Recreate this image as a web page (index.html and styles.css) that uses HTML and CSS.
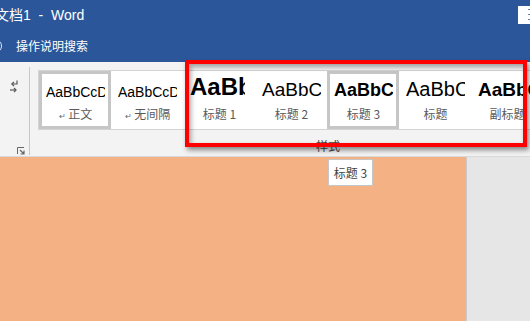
FILE: index.html
```html
<!DOCTYPE html>
<html lang="zh-CN">
<head>
<meta charset="utf-8">
<title>文档1 - Word</title>
<link rel="stylesheet" href="styles.css">
</head>
<body>
<div class="app">
  <header class="titlebar">
    <div class="title-row">
      <span class="title">文档1&nbsp;&nbsp;-&nbsp;&nbsp;Word</span>
      <span class="win-icon"><i></i><i></i><i></i></span>
    </div>
    <div class="search-row">
      <span class="bulb"></span>
      <span class="search-text">操作说明搜索</span>
    </div>
  </header>

  <section class="ribbon">
    <div class="para-group">
      <svg class="para-icon" width="8" height="13" viewBox="0 0 8 13">
        <path d="M7 0.5V4H2.5" fill="none" stroke="#555" stroke-width="1.2"/>
        <path d="M4 2L1.8 4L4 6" fill="none" stroke="#555" stroke-width="1.2"/>
        <path d="M0 10H5.5" fill="none" stroke="#555" stroke-width="1.2"/>
        <path d="M4 8L6 10L4 12" fill="none" stroke="#555" stroke-width="1.2"/>
      </svg>
      <svg class="launcher" width="8" height="8" viewBox="0 0 8 8">
        <path d="M0.5 7V0.5H7" fill="none" stroke="#666" stroke-width="1"/>
        <path d="M3 3L7 7M7 3.5V7H3.5" fill="none" stroke="#666" stroke-width="1.2"/>
      </svg>
    </div>
    <div class="sep"></div>
    <div class="styles-group">
      <div class="gallery">
        <div class="item selected">
          <div class="sample s-normal">AaBbCcDdEe</div>
          <div class="label"><span class="pm">↵</span> 正文</div>
        </div>
        <div class="item">
          <div class="sample s-normal">AaBbCcDdEe</div>
          <div class="label"><span class="pm">↵</span> 无间隔</div>
        </div>
        <div class="item">
          <div class="sample s-h1">AaBbCc</div>
          <div class="label">标题 1</div>
        </div>
        <div class="item">
          <div class="sample s-h2">AaBbCc</div>
          <div class="label">标题 2</div>
        </div>
        <div class="item selected">
          <div class="sample s-h3">AaBbCc</div>
          <div class="label">标题 3</div>
        </div>
        <div class="item">
          <div class="sample s-title">AaBbCc</div>
          <div class="label">标题</div>
        </div>
        <div class="item">
          <div class="sample s-sub">AaBbCc</div>
          <div class="label">副标题</div>
        </div>
      </div>
      <div class="group-label">样式</div>
    </div>
  </section>

  <main class="doc">
    <div class="page"></div>
    <div class="side"></div>
  </main>

  <div class="highlight"></div>
  <div class="tooltip">标题 3</div>
</div>
</body>
</html>
```

FILE: styles.css
```css
* { box-sizing: border-box; }

html, body {
  margin: 0;
  padding: 0;
}

body {
  width: 530px;
  height: 321px;
  overflow: hidden;
  font-family: "Liberation Sans", "Noto Sans CJK SC", sans-serif;
}

.app {
  position: relative;
  width: 530px;
  height: 321px;
  display: flex;
  flex-direction: column;
  overflow: hidden;
}

/* ---------- title bar ---------- */
.titlebar {
  background: #2b579a;
  height: 62px;
  color: #fff;
  display: flex;
  flex-direction: column;
}

.title-row {
  height: 31px;
  display: flex;
  justify-content: space-between;
  align-items: flex-start;
}

.title {
  font-size: 14px;
  line-height: 16px;
  margin-top: 7px;
  margin-left: -5px;
  font-family: "Liberation Sans", "Noto Sans CJK SC", sans-serif;
}

.win-icon {
  margin-top: 6px;
  width: 12px;
  height: 18px;
  background: #fff;
  display: flex;
  flex-direction: column;
  align-items: flex-end;
  gap: 4px;
  padding-top: 3px;
}

.win-icon i {
  width: 2px;
  height: 1px;
  background: #5b7fb8;
}

.search-row {
  height: 31px;
  display: flex;
  align-items: center;
  padding-bottom: 2px;
}

.bulb {
  width: 7px;
  height: 10px;
  margin-left: -5px;
  border: 1px solid #dfe6f0;
  border-radius: 50%;
  margin-right: 14px;
}

.search-text {
  font-family: "Noto Sans CJK SC", sans-serif;
  font-size: 12px;
  line-height: 16px;
}

/* ---------- ribbon ---------- */
.ribbon {
  height: 95px;
  background: #f3f3f3;
  border-bottom: 1px solid #d8d8d8;
  display: flex;
  overflow: hidden;
}

.para-group {
  width: 29px;
  flex: none;
  display: flex;
  flex-direction: column;
  align-items: flex-end;
}

.para-icon {
  margin-top: 18px;
  margin-right: 11px;
}

.launcher {
  margin-top: 54px;
  margin-right: 4px;
}

.sep {
  width: 1px;
  flex: none;
  height: 88px;
  margin-top: 5px;
  background: #c8c8c8;
}

.styles-group {
  flex: none;
  width: 596px;
  display: flex;
  flex-direction: column;
}

.gallery {
  margin-top: 8px;
  margin-left: 8px;
  height: 60px;
  background: #fff;
  border: 1px solid #d4d4d4;
  border-right: none;
  display: flex;
}

.item {
  width: 72px;
  height: 58px;
  flex: none;
  border: 3px solid transparent;
  padding: 0 3px 0 4px;
  display: flex;
  flex-direction: column;
}

.item.selected {
  border-color: #c6c6c6;
}

.sample {
  height: 25px;
  display: flex;
  align-items: flex-end;
  line-height: 1;
  white-space: nowrap;
  overflow: hidden;
  color: #000;
}

.s-normal { font-size: 14px; }
.s-h1 { font-size: 24px; font-weight: bold; margin-right: 4px; }
.s-h2 { font-size: 19px; }
.s-h3 { font-size: 18px; font-weight: bold; }
.s-title { font-size: 20px; }
.s-sub { font-size: 19px; font-weight: bold; }

.label {
  padding-top: 7px;
  line-height: 16px;
  font-size: 12px;
  font-family: "Noto Sans CJK SC", sans-serif;
  color: #5a5a5a;
  text-align: center;
  white-space: nowrap;
  overflow: hidden;
}

.pm {
  font-size: 8px;
  color: #666;
}

.group-label {
  margin-top: 8px;
  text-align: center;
  font-size: 12px;
  line-height: 16px;
  font-family: "Noto Sans CJK SC", sans-serif;
  color: #444;
}

/* ---------- document ---------- */
.doc {
  flex: 1;
  display: flex;
}

.page {
  width: 466px;
  background: #f4b183;
}

.side {
  flex: 1;
  background: #e6e6e6;
  border-left: 1px solid #c9c9c9;
}

/* ---------- overlays ---------- */
.highlight {
  position: absolute;
  left: 185px;
  top: 60px;
  width: 342px;
  height: 87px;
  border: 4px solid #ff0000;
  box-shadow: 2px 3px 5px rgba(0, 0, 0, 0.45), inset 2px 3px 5px rgba(0, 0, 0, 0.35);
}

.tooltip {
  position: absolute;
  left: 328px;
  top: 159px;
  width: 45px;
  height: 27px;
  background: #fff;
  border: 1px solid #c6c6c6;
  font-family: "Noto Sans CJK SC", sans-serif;
  font-size: 12px;
  line-height: 25px;
  color: #444;
  text-align: center;
}
```
